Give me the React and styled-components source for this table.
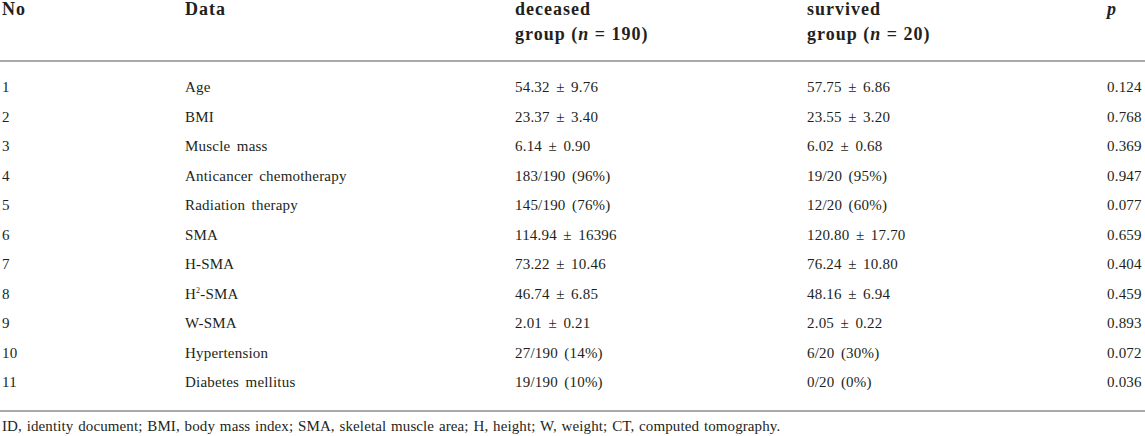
import React from "react";
import styled, { createGlobalStyle } from "styled-components";

const Global = createGlobalStyle`
  html, body { margin: 0; padding: 0; background: #fff; }
  body { font-family: "Liberation Serif", "Times New Roman", serif; color: #231f20; }
`;

const COLS = "183px 330px 292px 300px 1fr";

const Page = styled.div`
  width: 1145px;
  height: 436px;
  overflow: hidden;
  box-sizing: border-box;
`;

const HeadRow = styled.div`
  display: grid;
  grid-template-columns: ${COLS};
  height: 60px;
  padding-left: 2px;
  border-bottom: 2px solid #a9a9a9;
`;

const HeadCell = styled.div`
  font-size: 18px;
  font-weight: 700;
  letter-spacing: 1px;
  font-style: ${(p) => (p.$italic ? "italic" : "normal")};
`;

const HeadLine = styled.div`
  line-height: 18px;
  & + & {
    margin-top: 7px;
  }
`;

const Ital = styled.i`
  font-style: italic;
`;

const Body = styled.div`
  padding: 11px 0 12px 2px;
  border-bottom: 2px solid #a9a9a9;
`;

const Row = styled.div`
  display: grid;
  grid-template-columns: ${COLS};
  height: 29.5px;
  font-size: 15px;
  line-height: 29.5px;
  letter-spacing: 0.2px;
  word-spacing: 2.5px;
  white-space: nowrap;
`;

const Cell = styled.div``;

const Sup = styled.sup`
  font-size: 8px;
  vertical-align: 6px;
  line-height: 0;
`;

const Foot = styled.div`
  padding: 5px 0 0 2px;
  font-size: 15px;
  line-height: 18px;
  letter-spacing: 0.1px;
  word-spacing: 1px;
  white-space: nowrap;
`;

const rows = [
  ["1", "Age", "54.32 ± 9.76", "57.75 ± 6.86", "0.124"],
  ["2", "BMI", "23.37 ± 3.40", "23.55 ± 3.20", "0.768"],
  ["3", "Muscle mass", "6.14 ± 0.90", "6.02 ± 0.68", "0.369"],
  ["4", "Anticancer chemotherapy", "183/190 (96%)", "19/20 (95%)", "0.947"],
  ["5", "Radiation therapy", "145/190 (76%)", "12/20 (60%)", "0.077"],
  ["6", "SMA", "114.94 ± 16396", "120.80 ± 17.70", "0.659"],
  ["7", "H-SMA", "73.22 ± 10.46", "76.24 ± 10.80", "0.404"],
  ["8", <>H<Sup>2</Sup>-SMA</>, "46.74 ± 6.85", "48.16 ± 6.94", "0.459"],
  ["9", "W-SMA", "2.01 ± 0.21", "2.05 ± 0.22", "0.893"],
  ["10", "Hypertension", "27/190 (14%)", "6/20 (30%)", "0.072"],
  ["11", "Diabetes mellitus", "19/190 (10%)", "0/20 (0%)", "0.036"],
];

export default function App() {
  return (
    <>
      <Global />
      <Page>
        <HeadRow>
          <HeadCell>
            <HeadLine>No</HeadLine>
          </HeadCell>
          <HeadCell>
            <HeadLine>Data</HeadLine>
          </HeadCell>
          <HeadCell>
            <HeadLine>deceased</HeadLine>
            <HeadLine>
              group (<Ital>n</Ital> = 190)
            </HeadLine>
          </HeadCell>
          <HeadCell>
            <HeadLine>survived</HeadLine>
            <HeadLine>
              group (<Ital>n</Ital> = 20)
            </HeadLine>
          </HeadCell>
          <HeadCell $italic>
            <HeadLine>p</HeadLine>
          </HeadCell>
        </HeadRow>
        <Body>
          {rows.map((r, i) => (
            <Row key={i}>
              {r.map((c, j) => (
                <Cell key={j}>{c}</Cell>
              ))}
            </Row>
          ))}
        </Body>
        <Foot>
          ID, identity document; BMI, body mass index; SMA, skeletal muscle area; H, height; W, weight; CT, computed tomography.
        </Foot>
      </Page>
    </>
  );
}
